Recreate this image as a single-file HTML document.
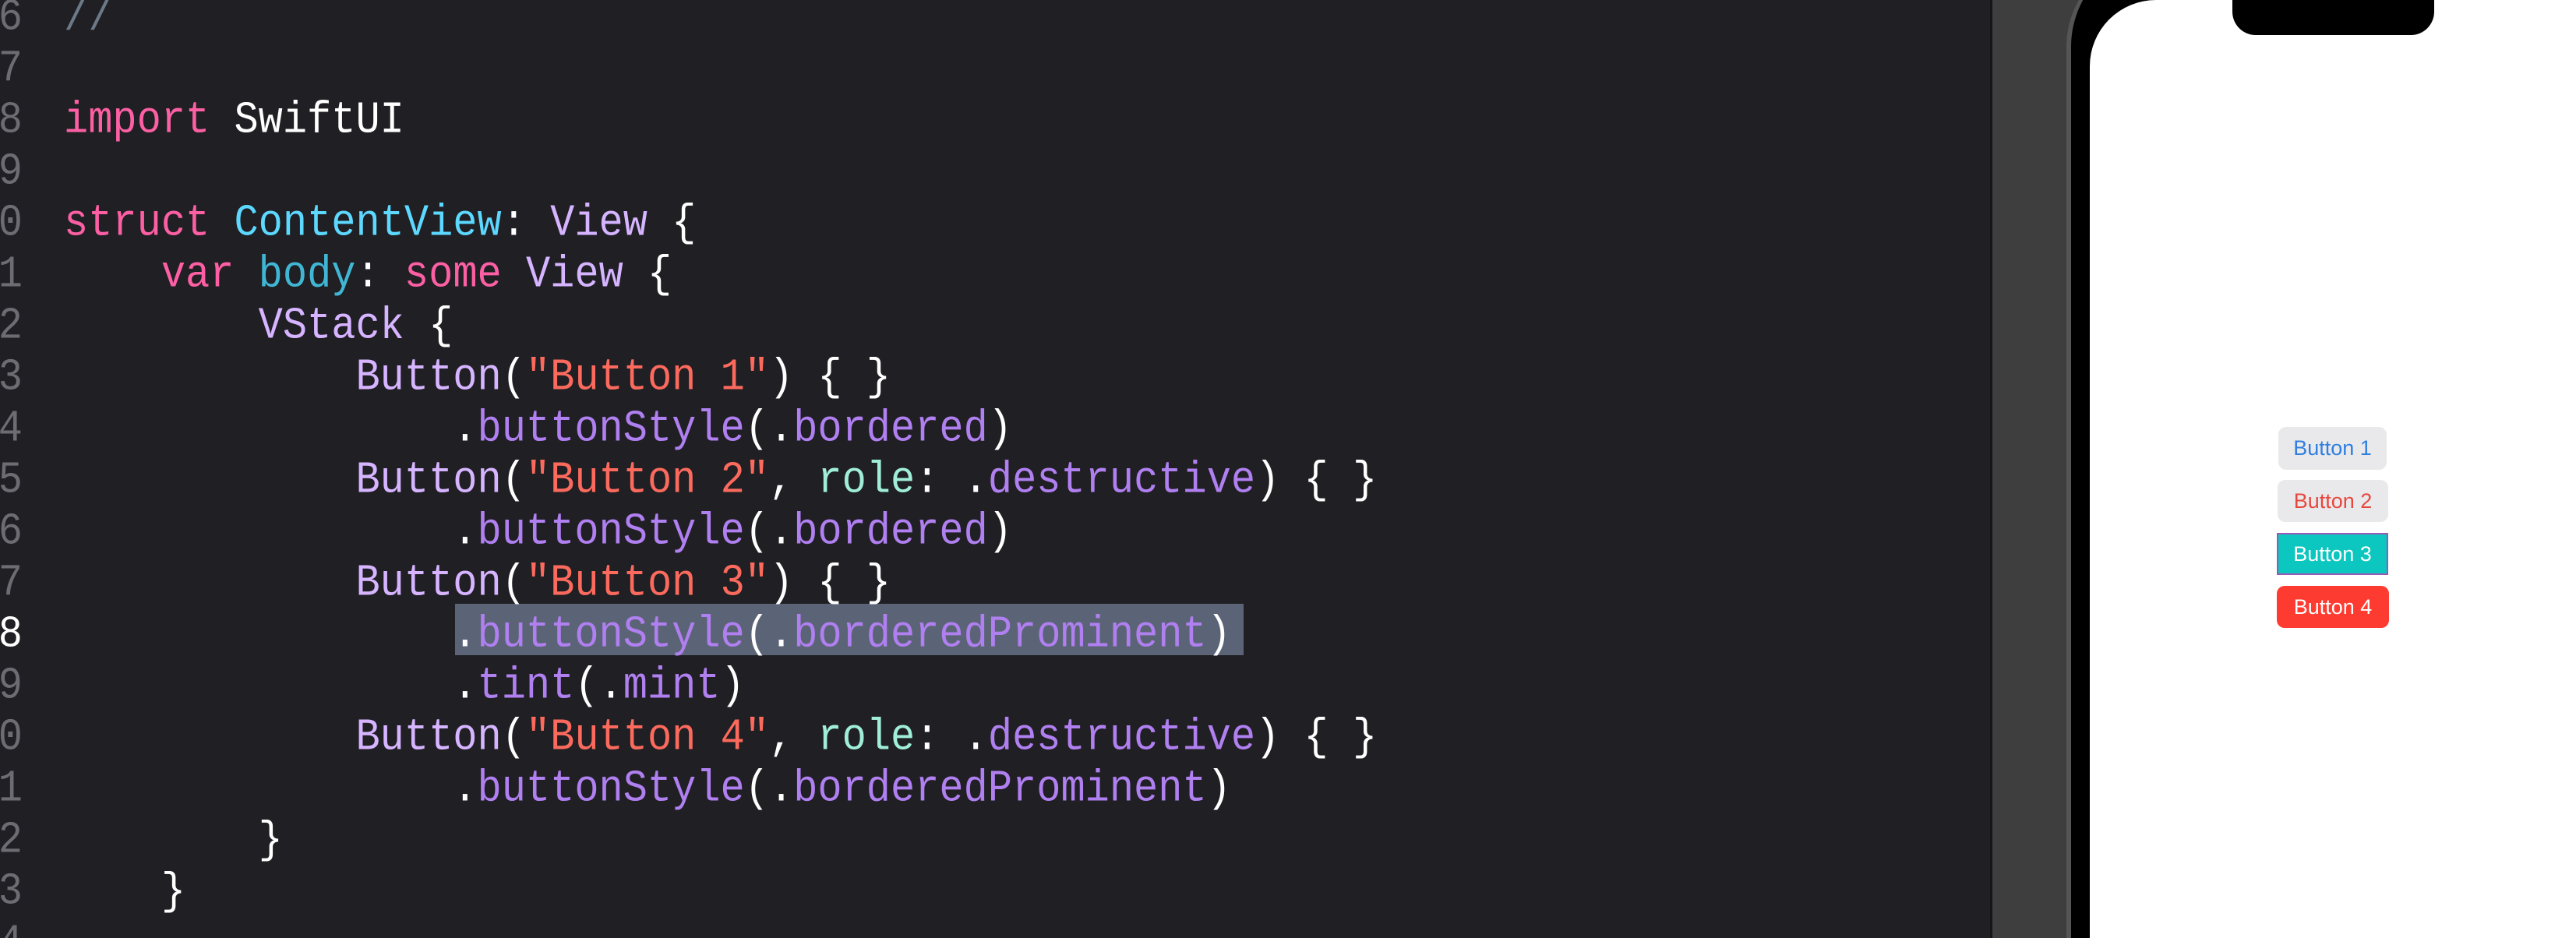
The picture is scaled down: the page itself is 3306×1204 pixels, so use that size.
<!DOCTYPE html>
<html><head><meta charset="utf-8"><style>
html,body{margin:0;padding:0;width:3306px;height:1204px;overflow:hidden;background:#1f1f24;}
#root{position:relative;width:3306px;height:1204px;overflow:hidden;}
#ed{position:absolute;left:0;top:0;width:2554px;height:1204px;background:#1f1f24;overflow:hidden;}
.ln{position:absolute;left:-200px;width:229px;text-align:right;font-family:"Liberation Mono",monospace;font-size:52px;color:#6c6c72;line-height:66px;transform:scaleY(1.1);transform-origin:0 50%;}
.c{position:absolute;left:82px;font-family:"Liberation Mono",monospace;font-size:52px;color:#fff;white-space:pre;line-height:66px;transform:scaleY(1.1);transform-origin:0 50%;}
.k{color:#fc5fa3}.t{color:#5dd8ff}.b{color:#41b6d4}.v{color:#d6b4ff}.s{color:#fc6a5d}.m{color:#b07ff0}.r{color:#a0eed6}.cm{color:#6c7986}
#hl{position:absolute;left:584px;top:775px;width:1012px;height:66px;background:#5b6477;}
#gp{position:absolute;left:2554px;top:0;width:752px;height:1204px;background:#3e3e3e;border-left:3px solid #151518;}
#ph{position:absolute;left:2652px;top:-60px;width:760px;height:1264px;background:#000;border-top-left-radius:120px;border-left:6px solid #555;}
#sc{position:absolute;left:2682px;top:0;width:700px;height:1204px;background:#fff;border-top-left-radius:85px;}
#notch{position:absolute;left:2865px;top:0;width:259px;height:45px;background:#000;border-radius:0 0 30px 30px;}
.btn{position:absolute;font-family:"Liberation Sans",sans-serif;font-size:27px;text-align:center;border-radius:10px;box-sizing:border-box;}
</style></head><body><div id="root">
<div id="ed">
<div id="hl"></div>
<div class="ln" style="top:-10px">6</div><div class="c cm" style="top:-10px">//</div>
<div class="ln" style="top:56px">7</div>
<div class="ln" style="top:122px">8</div><div class="c" style="top:122px"><span class="k">import</span> SwiftUI</div>
<div class="ln" style="top:188px">9</div>
<div class="ln" style="top:254px">10</div><div class="c" style="top:254px"><span class="k">struct</span> <span class="t">ContentView</span>: <span class="v">View</span> {</div>
<div class="ln" style="top:320px">11</div><div class="c" style="top:320px">    <span class="k">var</span> <span class="b">body</span>: <span class="k">some</span> <span class="v">View</span> {</div>
<div class="ln" style="top:386px">12</div><div class="c" style="top:386px">        <span class="v">VStack</span> {</div>
<div class="ln" style="top:452px">13</div><div class="c" style="top:452px">            <span class="v">Button</span>(<span class="s">"Button 1"</span>) { }</div>
<div class="ln" style="top:518px">14</div><div class="c" style="top:518px">                .<span class="m">buttonStyle</span>(.<span class="m">bordered</span>)</div>
<div class="ln" style="top:584px">15</div><div class="c" style="top:584px">            <span class="v">Button</span>(<span class="s">"Button 2"</span>, <span class="r">role</span>: .<span class="m">destructive</span>) { }</div>
<div class="ln" style="top:650px">16</div><div class="c" style="top:650px">                .<span class="m">buttonStyle</span>(.<span class="m">bordered</span>)</div>
<div class="ln" style="top:716px">17</div><div class="c" style="top:716px">            <span class="v">Button</span>(<span class="s">"Button 3"</span>) { }</div>
<div class="ln" style="top:782px;color:#fff">18</div><div class="c" style="top:782px">                .<span class="m">buttonStyle</span>(.<span class="m">borderedProminent</span>)</div>
<div class="ln" style="top:848px">19</div><div class="c" style="top:848px">                .<span class="m">tint</span>(.<span class="m">mint</span>)</div>
<div class="ln" style="top:914px">20</div><div class="c" style="top:914px">            <span class="v">Button</span>(<span class="s">"Button 4"</span>, <span class="r">role</span>: .<span class="m">destructive</span>) { }</div>
<div class="ln" style="top:980px">21</div><div class="c" style="top:980px">                .<span class="m">buttonStyle</span>(.<span class="m">borderedProminent</span>)</div>
<div class="ln" style="top:1046px">22</div><div class="c" style="top:1046px">        }</div>
<div class="ln" style="top:1112px">23</div><div class="c" style="top:1112px">    }</div>
<div class="ln" style="top:1178px">24</div>
</div>
<div id="gp"></div>
<div id="ph"></div>
<div id="sc"></div>
<div id="notch"></div>
<div class="btn" style="left:2924px;top:548px;width:139px;height:55px;line-height:55px;background:#e9e9eb;color:#2f7fe0">Button 1</div>
<div class="btn" style="left:2923px;top:616px;width:142px;height:54px;line-height:54px;background:#e9e9eb;color:#e8473e">Button 2</div>
<div class="btn" style="left:2922px;top:684px;width:143px;height:54px;line-height:50px;background:#0cc6c0;color:#fff;border:2px solid #9b59b6;border-radius:0">Button 3</div>
<div class="btn" style="left:2922px;top:752px;width:144px;height:54px;line-height:54px;background:#fe3b30;color:#fff">Button 4</div>
</div></body></html>
